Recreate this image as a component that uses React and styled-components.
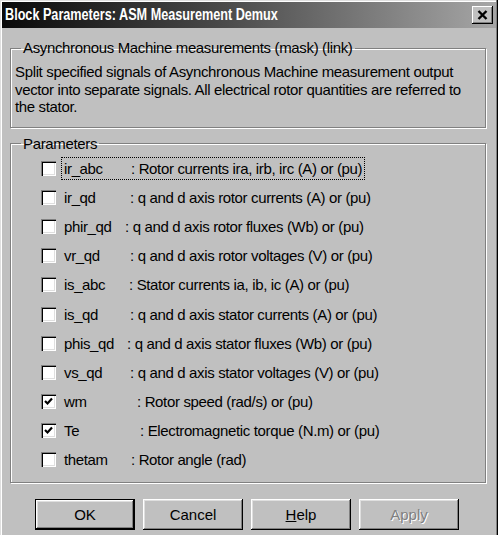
import React from 'react';
import styled, { createGlobalStyle } from 'styled-components';

const GlobalStyle = createGlobalStyle`
    body {
        margin: 0;
        background: #ffffff;
        font-family: "Liberation Sans", Arial, sans-serif;
    }
`

const Window = styled.div`
    width: 498px;
    height: 540px;
    box-sizing: border-box;
    background: #c0c0c0;
    padding: 2px 2px 0 2px;
    box-shadow: inset -1px 0 #000, inset -2px 0 #808080, inset 1px 1px #dfdfdf, inset 2px 2px #fff;
    overflow: hidden;
`

const TitleBar = styled.div`
    height: 26px;
    display: flex;
    align-items: center;
    justify-content: space-between;
    padding: 0 3px 0 3px;
    background: linear-gradient(to right, #0a0a0a 0%, #4a4a4a 45%, #a6a6a6 100%);
`

const Title = styled.span`
    display: inline-block;
    color: #fff;
    font-weight: bold;
    font-size: 16px;
    transform: scaleX(0.79);
    transform-origin: left center;
    white-space: nowrap;
`

const CloseButton = styled.div`
    width: 21px;
    height: 18px;
    box-sizing: border-box;
    background: #c0c0c0;
    display: flex;
    align-items: center;
    justify-content: center;
    box-shadow: inset -1px -1px #000, inset 1px 1px #fff, inset -2px -2px #808080;
`

const Content = styled.div`
    padding: 11px 10px 0 8px;
    letter-spacing: -0.35px;
`

const Group = styled.fieldset`
    margin: ${p => p.$top}px 0 0 0;
    padding: ${p => p.$pad};
    border: 1px solid #808080;
    box-shadow: inset 1px 1px #fff, 1px 1px #fff;
`

const Legend = styled.legend`
    font-size: 15px;
    line-height: 18px;
    padding: 0 2px;
    margin-left: 6px;
    color: #000;
`

const Description = styled.p`
    margin: 0;
    font-size: 15px;
    line-height: 17.5px;
    color: #000;
`

const Row = styled.div`
    height: 29.2px;
    display: flex;
    align-items: center;
    font-size: 15px;
    color: #000;
`

const Box = styled.div`
    width: 15px;
    height: 15px;
    box-sizing: border-box;
    background: #fff;
    margin-left: 26px;
    margin-right: 6px;
    display: flex;
    align-items: center;
    justify-content: center;
    box-shadow: inset 1px 1px #808080, inset 2px 2px #000, inset -1px -1px #fff, inset -2px -2px #dfdfdf;
`

const Label = styled.div`
    display: flex;
    align-items: center;
    height: 21px;
    padding: 0 2px;
    outline: ${p => (p.$focus ? '1px dotted #000' : 'none')};
`

const Name = styled.span`
    display: inline-block;
    width: ${p => p.$w}px;
`

const ButtonRow = styled.div`
    display: flex;
    justify-content: center;
    gap: 8px;
    margin-top: 16px;
    padding-right: 2px;
    letter-spacing: 0;
`

const Button = styled.div`
    width: 100px;
    height: 31px;
    box-sizing: border-box;
    display: flex;
    align-items: center;
    justify-content: center;
    font-size: 15px;
    color: ${p => (p.$disabled ? '#808080' : '#000')};
    text-shadow: ${p => (p.$disabled ? '1px 1px #fff' : 'none')};
    background: #c0c0c0;
    border: ${p => (p.$default ? '1px solid #000' : 'none')};
    box-shadow: inset -1px -1px #000, inset 1px 1px #fff, inset -2px -2px #808080, inset 2px 2px #dfdfdf;
`

const params = [
    { name: 'ir_abc', w: 67, desc: ': Rotor currents ira, irb, irc (A) or (pu)' },
    { name: 'ir_qd', w: 66, desc: ': q and d axis rotor currents (A) or (pu)' },
    { name: 'phir_qd', w: 61, desc: ': q and d axis rotor fluxes (Wb) or (pu)' },
    { name: 'vr_qd', w: 66, desc: ': q and d axis rotor voltages (V) or (pu)' },
    { name: 'is_abc', w: 65, desc: ': Stator currents ia, ib, ic (A) or (pu)' },
    { name: 'is_qd', w: 66, desc: ': q and d axis stator currents (A) or (pu)' },
    { name: 'phis_qd', w: 63, desc: ': q and d axis stator fluxes (Wb) or (pu)' },
    { name: 'vs_qd', w: 66, desc: ': q and d axis stator voltages (V) or (pu)' },
    { name: 'wm', w: 73, desc: ': Rotor speed (rad/s) or (pu)', checked: true },
    { name: 'Te', w: 76, desc: ': Electromagnetic torque (N.m) or (pu)', checked: true },
    { name: 'thetam', w: 67, desc: ': Rotor angle (rad)' },
];

function Check() {
    return (
        <svg width="9" height="9" viewBox="0 0 9 9">
            <path d="M1 4 L3.5 6.5 L8 1.5" stroke="#000" strokeWidth="2.2" fill="none" />
        </svg>
    );
}

function App() {
    return (
        <>
            <GlobalStyle />
            <Window>
                <TitleBar>
                    <Title>Block Parameters: ASM Measurement Demux</Title>
                    <CloseButton>
                        <svg width="11" height="10" viewBox="0 0 11 10">
                            <path d="M1.5 1 L9.5 9 M9.5 1 L1.5 9" stroke="#000" strokeWidth="2.4" />
                        </svg>
                    </CloseButton>
                </TitleBar>
                <Content>
                    <Group $top={0} $pad="6px 8px 11px 4px">
                        <Legend>Asynchronous Machine measurements (mask) (link)</Legend>
                        <Description>
                            Split specified signals of Asynchronous Machine measurement output
                            vector into separate signals. All electrical rotor quantities are referred to
                            the stator.
                        </Description>
                    </Group>
                    <Group $top={7} $pad="1px 4px 7px 4px">
                        <Legend>Parameters</Legend>
                        {params.map((p, i) => (
                            <Row key={p.name}>
                                <Box>{p.checked && <Check />}</Box>
                                <Label $focus={i === 0}>
                                    <Name $w={p.w}>{p.name}</Name>
                                    <span>{p.desc}</span>
                                </Label>
                            </Row>
                        ))}
                    </Group>
                    <ButtonRow>
                        <Button $default>OK</Button>
                        <Button>Cancel</Button>
                        <Button><span><u>H</u>elp</span></Button>
                        <Button $disabled>Apply</Button>
                    </ButtonRow>
                </Content>
            </Window>
        </>
    );
}

export default App;
